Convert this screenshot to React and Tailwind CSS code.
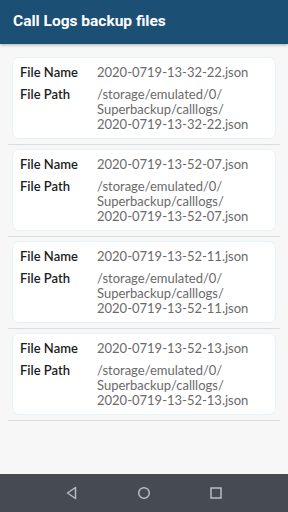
export default function App() {
  const items = [
    "2020-0719-13-32-22.json",
    "2020-0719-13-52-07.json",
    "2020-0719-13-52-11.json",
    "2020-0719-13-52-13.json",
  ];
  return (
    <div className="w-[288px] h-[512px] flex flex-col bg-[#f7f7f7] overflow-hidden">
      <div className="h-[44px] shrink-0 bg-[#1b5074] flex items-center px-[13px] shadow-[0_1px_3px_rgba(0,0,0,0.3)] z-10">
        <span className="text-white text-[15.5px] font-bold font-['Roboto',sans-serif]">
          Call Logs backup files
        </span>
      </div>
      <div className="flex-1 px-2 pt-[13px] font-['Lato',sans-serif] text-[13px]">
        {items.map((f) => (
          <div key={f}>
            <div className="mx-1 bg-white border border-[#e6f2f8] rounded-[7px] px-[7px] pt-[7px] pb-[6px] flex flex-col gap-[7px]">
              <div className="flex leading-[15px]">
                <div className="w-[77px] shrink-0 font-semibold text-[#1c1c1c]">File Name</div>
                <div className="text-[#6a6a6a]">{f}</div>
              </div>
              <div className="flex leading-[15px]">
                <div className="w-[77px] shrink-0 font-semibold text-[#1c1c1c]">File Path</div>
                <div className="text-[#6a6a6a]">
                  /storage/emulated/0/
                  <br />
                  Superbackup/calllogs/
                  <br />
                  {f}
                </div>
              </div>
            </div>
            <div className="mt-[5px] mb-[4px] h-px bg-[#dcdcdc]" />
          </div>
        ))}
      </div>
      <div className="h-[38px] shrink-0 bg-[#454b51] flex items-center justify-center gap-[56px]">
        <svg width="16" height="16" viewBox="0 0 16 16">
          <path d="M11.5 2.5 L3.5 8 L11.5 13.5 Z" fill="none" stroke="#b9bdc1" strokeWidth="1.5" strokeLinejoin="round" />
        </svg>
        <svg width="16" height="16" viewBox="0 0 16 16">
          <circle cx="8" cy="8" r="5.3" fill="none" stroke="#b9bdc1" strokeWidth="1.5" />
        </svg>
        <svg width="16" height="16" viewBox="0 0 16 16">
          <rect x="3" y="3" width="10" height="10" fill="none" stroke="#b9bdc1" strokeWidth="1.5" />
        </svg>
      </div>
    </div>
  );
}
